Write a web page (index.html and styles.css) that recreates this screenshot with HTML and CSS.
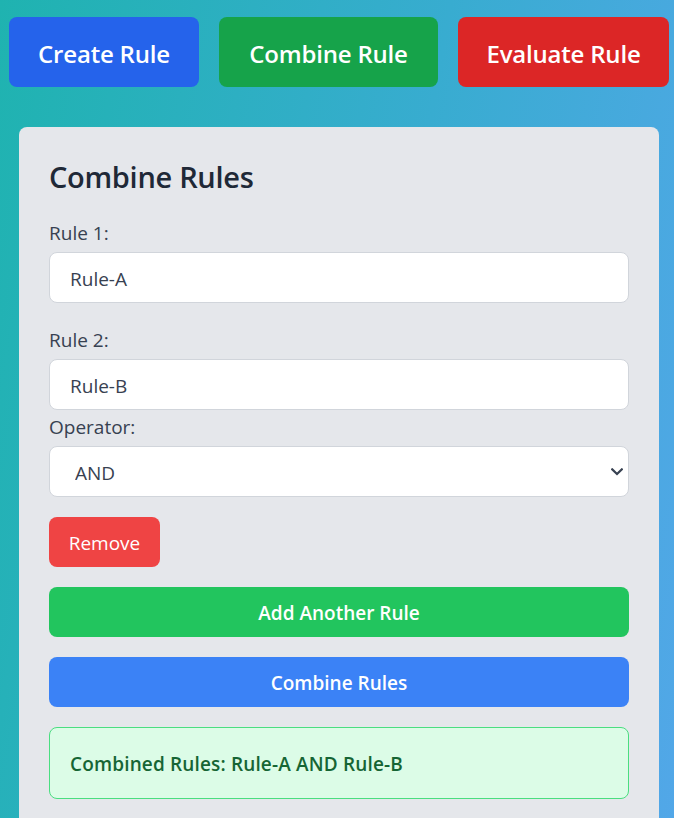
FILE: index.html
```html
<!DOCTYPE html>
<html lang="en">
<head>
<meta charset="utf-8">
<title>Combine Rules</title>
<link rel="stylesheet" href="styles.css">
</head>
<body>
<div class="page">
  <nav class="tabs">
    <button class="tab tab-create">Create Rule</button>
    <button class="tab tab-combine">Combine Rule</button>
    <button class="tab tab-evaluate">Evaluate Rule</button>
  </nav>
  <section class="card">
    <h2 class="card-title">Combine Rules</h2>
    <div class="rule rule-first">
      <label class="field-label" for="r1">Rule 1:</label>
      <input class="field" id="r1" type="text" value="Rule-A">
    </div>
    <div class="rule rule-second">
      <label class="field-label" for="r2">Rule 2:</label>
      <input class="field" id="r2" type="text" value="Rule-B">
    </div>
    <div class="rule">
      <label class="field-label" for="op">Operator:</label>
      <div class="select-wrap">
        <select class="field select" id="op">
          <option>AND</option>
          <option>OR</option>
        </select>
        <svg class="chevron" width="12" height="8" viewBox="0 0 12 8" aria-hidden="true">
          <path d="M1.2 1.4 L6 6 L10.8 1.4" fill="none" stroke="#374151" stroke-width="2.2" stroke-linecap="square"/>
        </svg>
      </div>
    </div>
    <div class="actions">
      <button class="btn btn-remove">Remove</button>
      <button class="btn btn-wide btn-add">Add Another Rule</button>
      <button class="btn btn-wide btn-combine">Combine Rules</button>
      <div class="result">Combined Rules: Rule-A AND Rule-B</div>
    </div>
  </section>
</div>
</body>
</html>
```
FILE: styles.css
```css
* {
  box-sizing: border-box;
}

html, body {
  margin: 0;
  padding: 0;
}

body {
  font-family: "Open Sans", "Noto Sans", "Liberation Sans", sans-serif;
  background: linear-gradient(100deg, #1fb3b0 0%, #38acd0 55%, #52a7e8 100%);
  min-height: 100vh;
}

.page {
  padding: 17px 0 0 9px;
}

.tabs {
  display: flex;
  gap: 20px;
  margin-bottom: 40px;
}

.tab {
  height: 70px;
  border: none;
  border-radius: 8px;
  color: #ffffff;
  font-family: inherit;
  font-size: 24px;
  font-weight: 600;
  padding: 2px 0 0;
  letter-spacing: -0.2px;
}

.tab-create {
  width: 190px;
  background: #2563eb;
}

.tab-combine {
  width: 219px;
  background: #16a34a;
}

.tab-evaluate {
  width: 211px;
  background: #dc2626;
}

.card {
  margin-left: 10px;
  width: 640px;
  background: #e5e7eb;
  border-radius: 8px;
  padding: 30px 30px 30px;
}

.card-title {
  margin: 2px 0 24px;
  font-size: 29px;
  line-height: 36px;
  font-weight: 600;
  color: #1f2937;
  letter-spacing: -0.3px;
}

.field-label {
  display: block;
  font-size: 19px;
  line-height: 28px;
  color: #374151;
  margin-bottom: 5px;
}

.field {
  display: block;
  width: 100%;
  height: 51px;
  border: 1px solid #d1d5db;
  border-radius: 8px;
  background: #ffffff;
  font-family: inherit;
  font-size: 19px;
  color: #374151;
  padding: 2px 20px 0;
  outline: none;
}

.rule-first {
  margin-bottom: 23px;
}

.rule-second {
  margin-bottom: 3px;
}

.select-wrap {
  position: relative;
}

.select {
  appearance: none;
  -webkit-appearance: none;
  padding-left: 25px;
}

.chevron {
  position: absolute;
  right: 6px;
  top: 22px;
}

.actions {
  display: flex;
  flex-direction: column;
  align-items: flex-start;
  gap: 20px;
  margin-top: 20px;
}

.btn {
  height: 50px;
  border: none;
  border-radius: 8px;
  color: #ffffff;
  font-family: inherit;
  font-size: 19px;
  padding: 2px 0 0;
}

.btn-remove {
  width: 111px;
  background: #ef4444;
}

.btn-wide {
  width: 100%;
  font-weight: 600;
}

.btn-add {
  background: #22c55e;
}

.btn-combine {
  background: #3b82f6;
}

.result {
  width: 100%;
  height: 72px;
  display: flex;
  align-items: center;
  padding: 2px 20px 0;
  background: #dcfce7;
  border: 1px solid #4ade80;
  border-radius: 8px;
  color: #166534;
  font-size: 19px;
  font-weight: 600;
  letter-spacing: 0.15px;
}
```
